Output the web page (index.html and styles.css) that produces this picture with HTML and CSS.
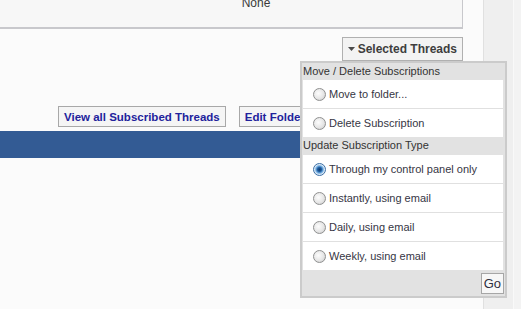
FILE: index.html
```html
<!DOCTYPE html>
<html lang="en">
<head>
    <meta charset="UTF-8">
    <title>Subscribed Threads</title>
    <link rel="stylesheet" href="styles.css">
</head>
<body>
    <div class="page">
        <div class="main">
            <div class="panel">
                <div class="panel-cell">None</div>
            </div>
            <div class="threadtools">
                <div class="menu-wrap">
                    <button class="menu-btn" type="button">
                        <svg class="arrow" width="7" height="4" viewBox="0 0 7 4"><path d="M0 0h7L3.5 4z" fill="#4a4a4a"/></svg>
                        Selected Threads
                    </button>
                    <form class="popup">
                        <div class="popup-head">Move / Delete Subscriptions</div>
                        <label class="popup-row"><span class="radio"></span>Move to folder...</label>
                        <label class="popup-row"><span class="radio"></span>Delete Subscription</label>
                        <div class="popup-head">Update Subscription Type</div>
                        <label class="popup-row"><span class="radio checked"></span>Through my control panel only</label>
                        <label class="popup-row"><span class="radio"></span>Instantly, using email</label>
                        <label class="popup-row"><span class="radio"></span>Daily, using email</label>
                        <label class="popup-row"><span class="radio"></span>Weekly, using email</label>
                        <div class="popup-foot"><button class="go" type="button">Go</button></div>
                    </form>
                </div>
            </div>
            <div class="actions">
                <button class="act-btn" type="button">View all Subscribed Threads</button>
                <button class="act-btn" type="button">Edit Folders</button>
            </div>
            <div class="blockhead"></div>
        </div>
        <div class="side">
            <div class="side-a"></div>
            <div class="side-b"></div>
        </div>
    </div>
</body>
</html>
```

FILE: styles.css
```css
body {
    margin: 0;
    background: #fbfbfb;
    font-family: 'Liberation Sans', Arial, sans-serif;
    color: #333;
    overflow: hidden;
}
.page {
    display: flex;
    min-height: 100vh;
}
.main {
    width: 483px;
    box-sizing: border-box;
    padding-right: 20px;
}
.panel {
    margin-top: -6px;
    height: 35px;
    box-sizing: border-box;
    background: #f7f7f7;
    border-right: 1px solid #c8c8cc;
    border-bottom: 2px solid #c8c8cc;
    padding-top: 1px;
}
.panel-cell {
    text-align: center;
    padding-left: 50px;
    font-size: 12px;
    line-height: 16px;
    color: #3a3a3a;
}
.threadtools {
    margin-top: 8px;
    display: flex;
    justify-content: flex-end;
}
.menu-wrap {
    position: relative;
}
.menu-btn {
    display: flex;
    align-items: center;
    gap: 3px;
    height: 24px;
    margin: 0;
    padding: 0 5px;
    background: #f3f3f3;
    border: 1px solid #b0b0b0;
    font-family: inherit;
    font-size: 12px;
    font-weight: bold;
    color: #3e3e3e;
}
.popup {
    position: absolute;
    top: 100%;
    right: -44px;
    width: 207px;
    box-sizing: border-box;
    margin: 0;
    background: #e2e2e2;
    border: 2px solid #cbcbcb;
    z-index: 2;
}
.popup-head {
    height: 17px;
    line-height: 17px;
    padding-left: 1px;
    font-size: 11px;
    color: #333;
}
.popup-row + .popup-head {
    height: 18px;
}
.popup-row {
    display: flex;
    align-items: center;
    height: 28px;
    margin: 0 2px 0 1px;
    padding-left: 10px;
    background: #fff;
    font-size: 11px;
    color: #363644;
}
.popup-row + .popup-row {
    border-top: 1px solid #e0e0e0;
}
.radio {
    width: 11px;
    height: 11px;
    margin-right: 3px;
    border: 1px solid #8f9090;
    border-radius: 50%;
    background: radial-gradient(circle at 40% 40%, #fdfdfd 0, #e6e6e6 55%, #c4c4c4 100%);
}
.radio.checked {
    border-color: #3a6ea5;
    background: radial-gradient(circle, #0c3a6e 0, #1d5a9c 2px, #6aa7dd 3.5px, #dbe9f6 5px, #f0f6fb 100%);
}
.popup-foot {
    display: flex;
    justify-content: flex-end;
    padding: 3px 1px 2px 0;
}
.go {
    height: 21px;
    margin: 0;
    padding: 0 2px;
    background: #f7f7f7;
    border: 1px solid #a6a6a6;
    font-family: inherit;
    font-size: 13px;
    color: #2e2e3e;
}
.actions {
    margin-top: 45px;
    display: flex;
    gap: 13px;
    padding-left: 58px;
}
.act-btn {
    height: 21px;
    margin: 0;
    padding: 0 5px;
    background: #f5f5f5;
    border: 1px solid #a8a8a8;
    font-family: inherit;
    font-size: 11.5px;
    font-weight: bold;
    color: #22229c;
    white-space: nowrap;
}
.blockhead {
    margin-top: 4px;
    height: 27px;
    background: #335b94;
}
.side {
    flex: 1;
    display: flex;
}
.side-a {
    width: 29px;
    background: #efefef;
    border-left: 1px solid #e0e0e0;
}
.side-b {
    flex: 1;
    background: #f3f3f3;
    border-left: 1px solid #f9f9f9;
}
```
